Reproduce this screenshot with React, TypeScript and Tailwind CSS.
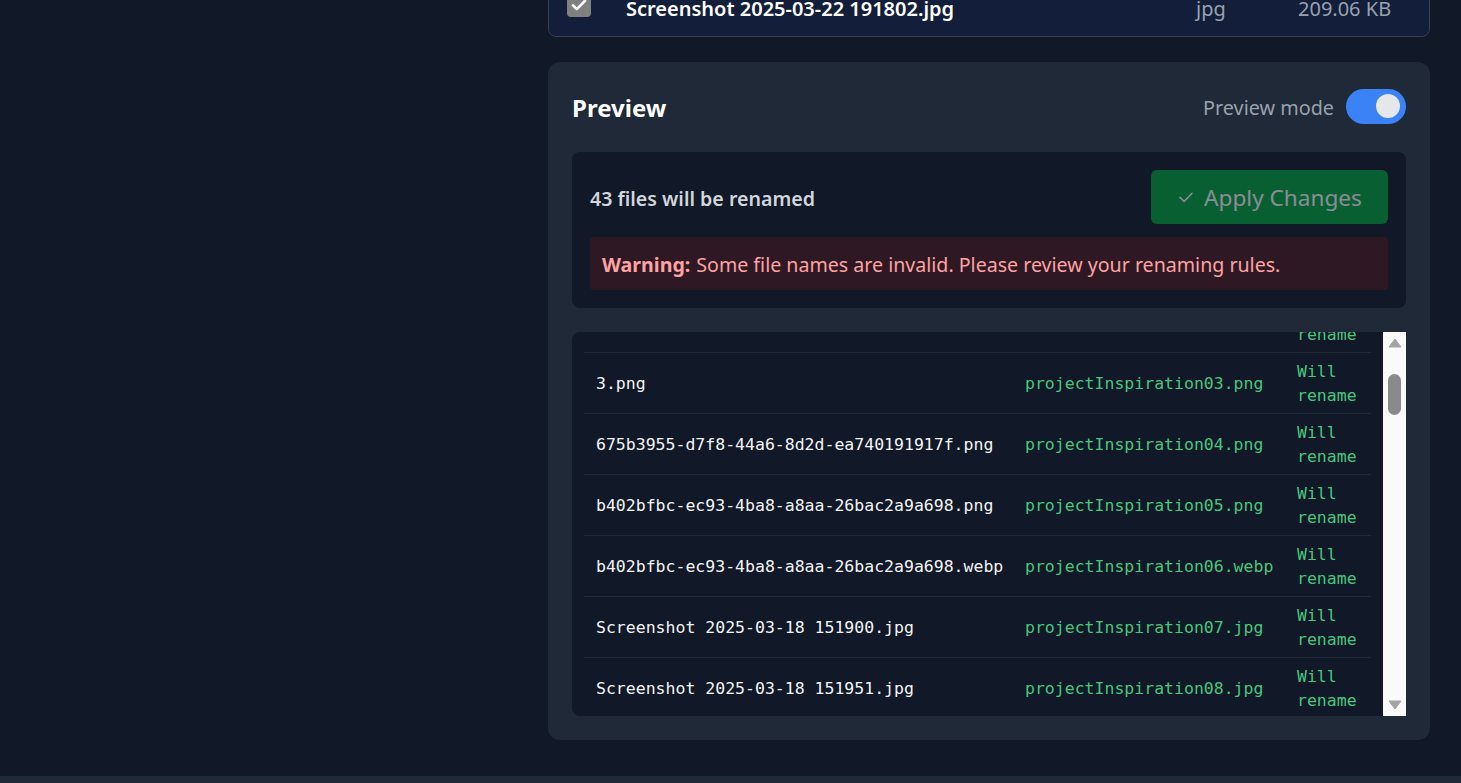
import React from "react";

const rows = [
  ["2.png", "projectInspiration02.png"],
  ["3.png", "projectInspiration03.png"],
  ["675b3955-d7f8-44a6-8d2d-ea740191917f.png", "projectInspiration04.png"],
  ["b402bfbc-ec93-4ba8-a8aa-26bac2a9a698.png", "projectInspiration05.png"],
  ["b402bfbc-ec93-4ba8-a8aa-26bac2a9a698.webp", "projectInspiration06.webp"],
  ["Screenshot 2025-03-18 151900.jpg", "projectInspiration07.jpg"],
  ["Screenshot 2025-03-18 151951.jpg", "projectInspiration08.jpg"],
];

export default function App() {
  return (
    <div
      className="w-[1461px] h-[783px] overflow-hidden bg-[#111827] flex flex-col"
      style={{ fontFamily: '"Noto Sans", "Open Sans", sans-serif' }}
    >
      <div className="flex flex-1 min-h-0">
        <div className="w-[548px] shrink-0" />
        <div className="w-[882px] shrink-0 flex flex-col">
          {/* file list card (scrolled, only bottom visible) */}
          <div className="-mt-[20px] border border-[#374151] rounded-lg overflow-hidden">
            <div className="flex items-start h-[56px] bg-blue-900/20">
              <div className="ml-[18px] mt-[12px] w-[24px] h-[24px] rounded-[4px] bg-[#808080] flex items-center justify-center">
                <svg width="18" height="18" viewBox="0 0 24 24" fill="none">
                  <path d="M4 12.5l5 5L20 6.5" stroke="white" strokeWidth="3.6" strokeLinecap="round" strokeLinejoin="round" />
                </svg>
              </div>
              <div className="ml-[35px] mt-[14px] text-[20px] leading-[28px] font-semibold text-white">
                Screenshot 2025-03-22 191802.jpg
              </div>
              <div className="ml-auto mt-[14px] flex text-[20px] leading-[28px] text-gray-400">
                <span className="w-[102px]">jpg</span>
                <span className="w-[131px]">209.06 KB</span>
              </div>
            </div>
          </div>

          {/* preview panel */}
          <div className="mt-[25px] bg-[#1f2937] rounded-xl p-6 h-[678px] flex flex-col">
            <div className="flex items-center justify-between h-[40px]">
              <h2 className="text-[24px] font-bold text-white leading-none pt-[4px]">Preview</h2>
              <div className="flex items-center gap-3">
                <span className="text-[19.8px] text-gray-400 pt-[3px]">Preview mode</span>
                <div className="w-[60px] h-[35px] rounded-full bg-[#3b82f6] flex items-center justify-end pr-[6px]">
                  <div className="w-[24px] h-[24px] rounded-full bg-[#e5e7eb]" />
                </div>
              </div>
            </div>

            <div className="mt-[26px] bg-[#111827] rounded-lg p-[18px] flex flex-col gap-[13px]">
              <div className="flex items-center justify-between">
                <span className="text-[19.6px] font-semibold text-gray-300 pt-[3px]">43 files will be renamed</span>
                <button className="w-[237px] h-[54px] rounded-md bg-green-600 opacity-50 flex items-center justify-center gap-[9px] text-white text-[22.6px]">
                  <svg width="18" height="18" viewBox="0 0 24 24" fill="none">
                    <path d="M4 12.5l5.5 5.5L20 7" stroke="currentColor" strokeWidth="2.2" strokeLinecap="round" strokeLinejoin="round" />
                  </svg>
                  <span className="pt-[2px]">Apply Changes</span>
                </button>
              </div>
              <div className="h-[53px] rounded bg-red-900/25 px-3 flex items-center text-[19.6px] text-red-300 pt-[2px]">
                <span className="font-bold mr-[6px]">Warning:</span>
                <span>Some file names are invalid. Please review your renaming rules.</span>
              </div>
            </div>

            <div className="mt-6 h-[384px] flex bg-[#111827] rounded-lg">
              <div className="flex-1 overflow-hidden rounded-l-lg px-3">
                <div
                  className="-mt-[41px] text-[16.5px] leading-[24px]"
                  style={{ fontFamily: '"DejaVu Sans Mono", monospace' }}
                >
                  {rows.map(([from, to]) => (
                    <div key={to} className="flex items-center border-t border-[#1f2937] h-[61px] pt-[2px]">
                      <div className="w-[429px] px-3 text-gray-100 whitespace-nowrap">{from}</div>
                      <div className="w-[272px] px-3 text-[#45c77c] whitespace-nowrap">{to}</div>
                      <div className="w-[86px] px-3 text-[#45c77c]">
                        Will
                        <br />
                        rename
                      </div>
                    </div>
                  ))}
                </div>
              </div>
              <div className="w-[23px] bg-[#fafafa] flex flex-col items-center justify-between py-[6px]">
                <div className="flex flex-col items-center w-full">
                  <svg width="14" height="10" viewBox="0 0 14 10">
                    <path d="M7 1L13 9H1Z" fill="#a3a3a3" stroke="#a3a3a3" strokeLinejoin="round" />
                  </svg>
                  <div className="mt-[26px] w-[13px] h-[41px] rounded-full bg-[#8a8a8a]" />
                </div>
                <svg width="14" height="10" viewBox="0 0 14 10">
                  <path d="M1 1H13L7 9Z" fill="#a3a3a3" stroke="#a3a3a3" strokeLinejoin="round" />
                </svg>
              </div>
            </div>
          </div>
        </div>
      </div>
      <div className="h-[7px] bg-[#1f2937] shrink-0 mt-[36px]" />
    </div>
  );
}
